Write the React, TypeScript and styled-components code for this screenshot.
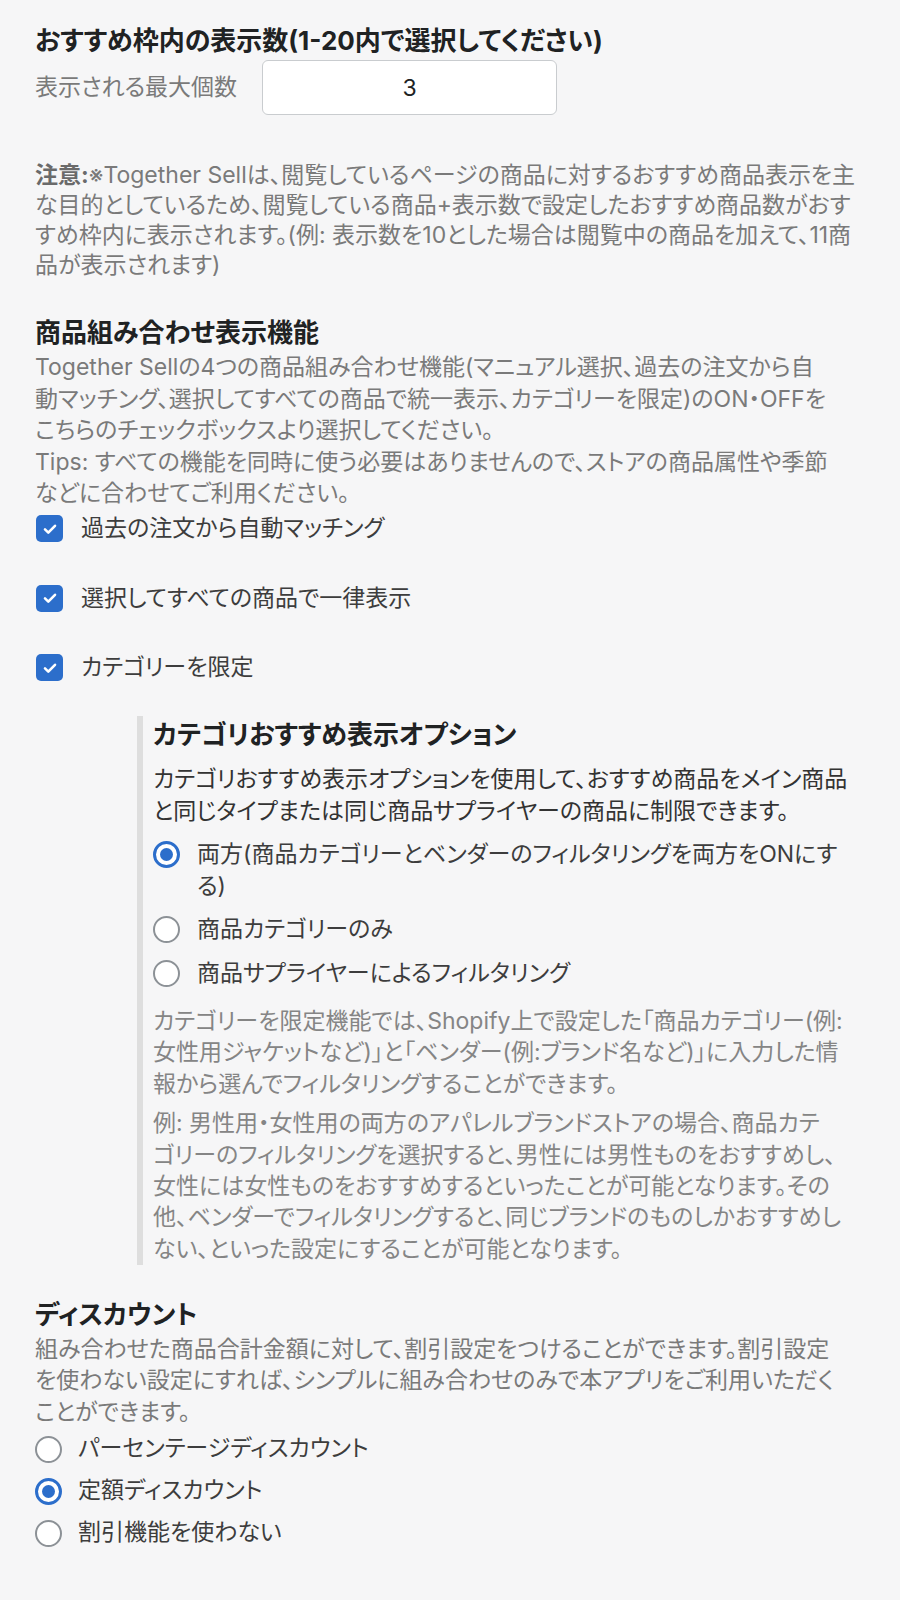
import styled, { createGlobalStyle } from "styled-components";

const GlobalStyle = createGlobalStyle`
    body {
        margin: 0;
        background: #f6f6f7;
        font-family: "Inter", "Noto Sans CJK JP", sans-serif;
        font-feature-settings: "palt";
        color: #202223;
    }
`

const noteLines = [
    "な目的としているため、閲覧している商品+表示数で設定したおすすめ商品数がおす",
    "すめ枠内に表示されます。(例: 表示数を10とした場合は閲覧中の商品を加えて、11商",
    "品が表示されます)",
]

const comboText = [
    "Together Sellの4つの商品組み合わせ機能(マニュアル選択、過去の注文から自",
    "動マッチング、選択してすべての商品で統一表示、カテゴリーを限定)のON・OFFを",
    "こちらのチェックボックスより選択してください。",
    "Tips: すべての機能を同時に使う必要はありませんので、ストアの商品属性や季節",
    "などに合わせてご利用ください。",
].join("\n")

const features = [
    "過去の注文から自動マッチング",
    "選択してすべての商品で一律表示",
    "カテゴリーを限定",
]

const categoryOptions = [
    { label: "両方(商品カテゴリーとベンダーのフィルタリングを両方をONにす\nる)", checked: true },
    { label: "商品カテゴリーのみ", checked: false },
    { label: "商品サプライヤーによるフィルタリング", checked: false },
]

const categoryNotes = [
    [
        "カテゴリーを限定機能では、Shopify上で設定した「商品カテゴリー(例:",
        "女性用ジャケットなど)」と「ベンダー(例:ブランド名など)」に入力した情",
        "報から選んでフィルタリングすることができます。",
    ],
    [
        "例: 男性用・女性用の両方のアパレルブランドストアの場合、商品カテ",
        "ゴリーのフィルタリングを選択すると、男性には男性ものをおすすめし、",
        "女性には女性ものをおすすめするといったことが可能となります。その",
        "他、ベンダーでフィルタリングすると、同じブランドのものしかおすすめし",
        "ない、といった設定にすることが可能となります。",
    ],
]

const discountText = [
    "組み合わせた商品合計金額に対して、割引設定をつけることができます。割引設定",
    "を使わない設定にすれば、シンプルに組み合わせのみで本アプリをご利用いただく",
    "ことができます。",
].join("\n")

const discountOptions = [
    { label: "パーセンテージディスカウント", checked: false },
    { label: "定額ディスカウント", checked: true },
    { label: "割引機能を使わない", checked: false },
]

const Radio = ({ label, checked }: { label: string; checked: boolean }) => (
    <RadioRow>
        <RadioCircle checked={checked} />
        <OptionLabel>{label}</OptionLabel>
    </RadioRow>
)

export default function App() {
    return (
        <>
            <GlobalStyle />
            <Page>
                <Title>おすすめ枠内の表示数(1-20内で選択してください)</Title>
                <CountRow>
                    <CountLabel>表示される最大個数</CountLabel>
                    <CountInput>3</CountInput>
                </CountRow>
                <Note>
                    <strong>注意:</strong>※Together Sellは、閲覧しているページの商品に対するおすすめ商品表示を主
                    {"\n" + noteLines.join("\n")}
                </Note>

                <Title $top={36}>商品組み合わせ表示機能</Title>
                <Text>{comboText}</Text>
                <CheckList>
                    {features.map((feature, index) => (
                        <CheckRow key={index}>
                            <CheckBox>
                                <svg width="18" height="18" viewBox="0 0 18 18" fill="none">
                                    <path d="M4 9.4l3.3 3.2L14 5.8" stroke="#fff" strokeWidth="2.6" strokeLinecap="round" strokeLinejoin="round" />
                                </svg>
                            </CheckBox>
                            <OptionLabel>{feature}</OptionLabel>
                        </CheckRow>
                    ))}
                </CheckList>

                <CategoryBlock>
                    <Title>カテゴリおすすめ表示オプション</Title>
                    <CategoryDesc>
                        {"カテゴリおすすめ表示オプションを使用して、おすすめ商品をメイン商品\nと同じタイプまたは同じ商品サプライヤーの商品に制限できます。"}
                    </CategoryDesc>
                    <RadioList $top={12} $gap={12} $inset={17}>
                        {categoryOptions.map((option, index) => (
                            <Radio key={index} label={option.label} checked={option.checked} />
                        ))}
                    </RadioList>
                    {categoryNotes.map((lines, index) => (
                        <CategoryNote key={index} $top={index === 0 ? 17 : 8.5}>
                            {lines.join("\n")}
                        </CategoryNote>
                    ))}
                </CategoryBlock>

                <Title $top={33}>ディスカウント</Title>
                <Text>{discountText}</Text>
                <RadioList $top={5} $gap={10.5} $inset={16}>
                    {discountOptions.map((option, index) => (
                        <Radio key={index} label={option.label} checked={option.checked} />
                    ))}
                </RadioList>
            </Page>
        </>
    )
}

const Page = styled.main`
    width: 900px;
    box-sizing: border-box;
    padding: 24px 10px 60px 35px;
`

const Title = styled.h2<{ $top?: number }>`
    margin: ${props => props.$top ?? 0}px 0 0;
    font-size: 26px;
    line-height: 34px;
    font-weight: 700;
    color: #202223;
    white-space: nowrap;
`

const CountRow = styled.div`
    display: flex;
    align-items: center;
    gap: 25px;
    margin-top: 2px;
`

const CountLabel = styled.span`
    font-size: 23px;
    line-height: 31px;
    color: #7a7a7a;
`

const CountInput = styled.div`
    width: 295px;
    height: 55px;
    flex-shrink: 0;
    box-sizing: border-box;
    display: flex;
    align-items: center;
    justify-content: center;
    background: #fff;
    border: 1px solid #c9cccf;
    border-radius: 6px;
    font-size: 23px;
    color: #202223;
`

const Note = styled.p`
    margin: 45px 0 0;
    font-size: 23px;
    line-height: 30px;
    color: #7a7a7a;
    white-space: pre-line;

    strong {
        font-weight: 700;
        color: #6a6a6a;
    }
`

const Text = styled.p`
    margin: 2px 0 0;
    font-size: 23px;
    line-height: 31.5px;
    color: #7a7a7a;
    white-space: pre-line;
`

const CheckList = styled.div`
    display: flex;
    flex-direction: column;
    gap: 38px;
    margin-top: 3.5px;
`

const CheckRow = styled.label`
    display: flex;
    align-items: center;
    gap: 18px;
    height: 31.5px;
`

const CheckBox = styled.span`
    width: 27px;
    height: 27px;
    flex-shrink: 0;
    margin-left: 1px;
    box-sizing: border-box;
    border-radius: 5px;
    background: #2c6ecb;
    display: flex;
    align-items: center;
    justify-content: center;
`

const OptionLabel = styled.span`
    font-size: 23px;
    line-height: 31.5px;
    color: #3d3d3d;
    white-space: pre-line;
`

const CategoryBlock = styled.section`
    margin: 32.5px 0 0 102px;
    padding: 2px 0 0 10px;
    border-left: 6px solid #dedede;
`

const CategoryDesc = styled.p`
    margin: 11px 0 0;
    font-size: 23px;
    line-height: 32px;
    color: #333;
    white-space: pre-line;
`

const CategoryNote = styled.p<{ $top: number }>`
    margin: ${props => props.$top}px 0 0;
    font-size: 23px;
    line-height: 31.3px;
    color: #858585;
    white-space: pre-line;
`

const RadioList = styled.div<{ $top: number; $gap: number; $inset: number }>`
    display: flex;
    flex-direction: column;
    gap: ${props => props.$gap}px;
    margin-top: ${props => props.$top}px;

    label {
        gap: ${props => props.$inset}px;
    }
`

const RadioRow = styled.label`
    display: flex;
    align-items: flex-start;
`

const RadioCircle = styled.span<{ checked: boolean }>`
    width: 27px;
    height: 27px;
    flex-shrink: 0;
    margin-top: 2.25px;
    box-sizing: border-box;
    border-radius: 50%;
    background: #fff;
    border: ${props => (props.checked ? "3px solid #2c6ecb" : "2.5px solid #8c9196")};
    display: flex;
    align-items: center;
    justify-content: center;

    &::after {
        content: "";
        display: ${props => (props.checked ? "block" : "none")};
        width: 13px;
        height: 13px;
        border-radius: 50%;
        background: #2c6ecb;
    }
`
